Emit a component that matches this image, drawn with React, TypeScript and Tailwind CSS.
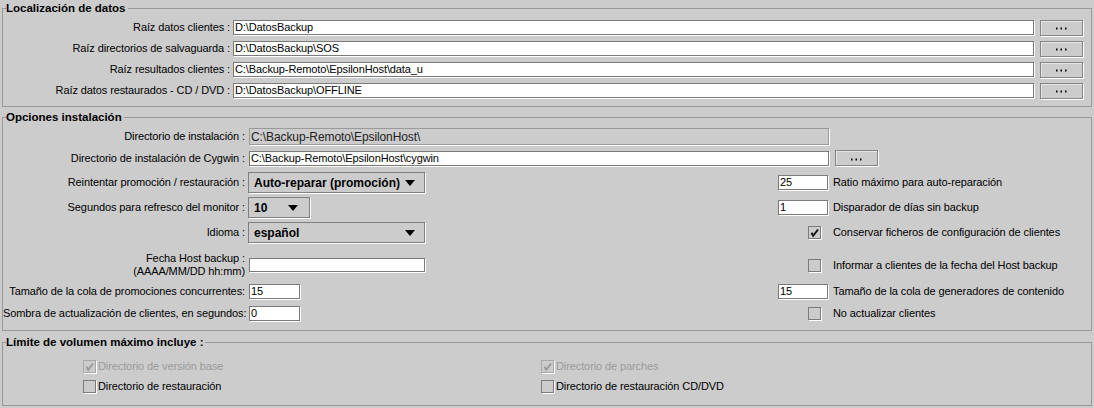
import React from "react";

function Field({ className = "", value = "", disabled = false }: { className?: string; value?: string; disabled?: boolean }) {
  return (
    <div
      className={
        "flex items-center whitespace-nowrap overflow-hidden pl-[1px] border shadow-[1px_1px_0_#ffffff] " +
        (disabled ? "bg-[#cccccc] border-[#9a9a9a] text-[#222222] text-[12px]" : "bg-white border-[#7a7a7a] ") +
        " " +
        className
      }
    >
      {value}
    </div>
  );
}

function Btn({ className = "" }: { className?: string }) {
  return (
    <div
      className={
        "flex items-center justify-center bg-[#cccccc] border border-[#858585] shadow-[1px_1px_0_#ffffff,inset_1px_1px_0_#e6e6e6] " +
        className
      }
    >
      <svg width="11" height="3" viewBox="0 0 11 3" className="mt-[2px]">
        <rect x="0" y="0.5" width="1.5" height="2" fill="#000000" />
        <rect x="4.5" y="0.5" width="1.5" height="2" fill="#000000" />
        <rect x="9" y="0.5" width="1.5" height="2" fill="#000000" />
      </svg>
    </div>
  );
}

function Combo({ className = "", value }: { className?: string; value: string }) {
  return (
    <div
      className={
        "flex items-center justify-between h-[21px] bg-[#cccccc] border border-[#808080] shadow-[1px_1px_0_#ffffff] pl-[5px] pr-[9px] font-bold text-[12px] tracking-normal " +
        className
      }
    >
      <span>{value}</span>
      <svg width="10" height="6" viewBox="0 0 10 6">
        <polygon points="0,0 10,0 5,6" fill="#000000" />
      </svg>
    </div>
  );
}

function Check({ checked = false, disabled = false }: { checked?: boolean; disabled?: boolean }) {
  return (
    <div
      className={
        "w-[13px] h-[13px] shrink-0 flex items-center justify-center bg-[#cccccc] border shadow-[1px_1px_0_#ffffff] " +
        (disabled ? "border-[#a8a8a8]" : "border-[#7a7a7a]")
      }
    >
      {checked && (
        <svg width="11" height="11" viewBox="0 0 11 11">
          <polyline
            points="2.5,5.8 4.2,8.8 9,2.5"
            fill="none"
            stroke={disabled ? "#9a9a9a" : "#111111"}
            strokeWidth="2"
          />
        </svg>
      )}
    </div>
  );
}

function Legend({ children }: { children: React.ReactNode }) {
  return <legend className="ml-[3px] pr-[2px] font-bold text-[11.5px] leading-[14px] tracking-normal">{children}</legend>;
}

function DataRow({ label, value }: { label: string; value: string }) {
  return (
    <div className="flex items-center h-[15px]">
      <div className="w-[227px] text-right whitespace-nowrap">{label}</div>
      <Field className="ml-[3px] w-[801px] h-[15px]" value={value} />
      <Btn className="ml-[6px] w-[43px] h-[16px]" />
    </div>
  );
}

function LeftLabel({ children }: { children: React.ReactNode }) {
  return <div className="w-[242px] text-right whitespace-nowrap">{children}</div>;
}

export default function App() {
  return (
    <div className="w-[1094px] h-[408px] overflow-hidden bg-[#cccccc] pt-[1px] px-[2px] text-[11px] tracking-[-0.1px] text-black font-['Liberation_Sans',Arial,sans-serif]">
      <fieldset className="border border-[#999999] pt-[5px] pb-[8px]">
        <Legend>Localización de datos</Legend>
        <div className="flex flex-col gap-[6px]">
          <DataRow label="Raíz datos clientes :" value="D:\DatosBackup" />
          <DataRow label="Raíz directorios de salvaguarda :" value="D:\DatosBackup\SOS" />
          <DataRow label="Raíz resultados clientes :" value="C:\Backup-Remoto\EpsilonHost\data_u" />
          <DataRow label="Raíz datos restaurados - CD / DVD :" value="D:\DatosBackup\OFFLINE" />
        </div>
      </fieldset>

      <fieldset className="mt-[3px] border border-[#999999] pt-[4px] pb-[9px]">
        <Legend>Opciones instalación</Legend>
        <div className="flex flex-col">
          <div className="flex items-center h-[17px]">
            <LeftLabel>Directorio de instalación :</LeftLabel>
            <Field disabled className="ml-[4px] w-[580px] h-[17px]" value="C:\Backup-Remoto\EpsilonHost\" />
          </div>

          <div className="mt-[5px] flex items-center h-[16px]">
            <LeftLabel>Directorio de instalación de Cygwin :</LeftLabel>
            <Field className="ml-[4px] w-[580px] h-[15px]" value="C:\Backup-Remoto\EpsilonHost\cygwin" />
            <Btn className="ml-[6px] w-[43px] h-[16px]" />
          </div>

          <div className="mt-[6px] flex items-center h-[21px]">
            <div className="w-[775px] flex items-center">
              <LeftLabel>Reintentar promoción / restauración :</LeftLabel>
              <Combo className="ml-[3px] w-[177px]" value="Auto-reparar (promoción)" />
            </div>
            <Field className="w-[50px] h-[15px]" value="25" />
            <span className="ml-[5px] whitespace-nowrap">Ratio máximo para auto-reparación</span>
          </div>

          <div className="mt-[4px] flex items-center h-[21px]">
            <div className="w-[775px] flex items-center">
              <LeftLabel>Segundos para refresco del monitor :</LeftLabel>
              <Combo className="ml-[3px] w-[62px] pr-[11px]" value="10" />
            </div>
            <Field className="w-[50px] h-[15px]" value="1" />
            <span className="ml-[5px] whitespace-nowrap">Disparador de días sin backup</span>
          </div>

          <div className="mt-[4px] flex items-center h-[21px]">
            <div className="w-[775px] flex items-center">
              <LeftLabel>Idioma :</LeftLabel>
              <Combo className="ml-[3px] w-[177px]" value="español" />
            </div>
            <div className="ml-[30px]">
              <Check checked />
            </div>
            <span className="ml-[12px] whitespace-nowrap">Conservar ficheros de configuración de clientes</span>
          </div>

          <div className="mt-[9px] flex items-center h-[26px]">
            <div className="w-[775px] flex items-center">
              <div className="w-[242px] text-right whitespace-nowrap leading-[13px]">
                <div>Fecha Host backup :</div>
                <div>(AAAA/MM/DD hh:mm)</div>
              </div>
              <Field className="ml-[4px] w-[176px] h-[14px]" value="" />
            </div>
            <div className="ml-[30px]">
              <Check />
            </div>
            <span className="ml-[12px] whitespace-nowrap">Informar a clientes de la fecha del Host backup</span>
          </div>

          <div className="mt-[6px] flex items-center h-[15px]">
            <div className="w-[775px] flex items-center">
              <LeftLabel>Tamaño de la cola de promociones concurrentes:</LeftLabel>
              <Field className="ml-[4px] w-[51px] h-[15px]" value="15" />
            </div>
            <Field className="w-[50px] h-[15px]" value="15" />
            <span className="ml-[5px] whitespace-nowrap">Tamaño de la cola de generadores de contenido</span>
          </div>

          <div className="mt-[7px] flex items-center h-[15px]">
            <div className="w-[775px] flex items-center">
              <LeftLabel>Sombra de actualización de clientes, en segundos:</LeftLabel>
              <Field className="ml-[4px] w-[51px] h-[15px]" value="0" />
            </div>
            <div className="ml-[30px]">
              <Check />
            </div>
            <span className="ml-[12px] whitespace-nowrap">No actualizar clientes</span>
          </div>
        </div>
      </fieldset>

      <fieldset className="mt-[4px] border border-[#999999] pt-[11px] pb-[12px]">
        <Legend>Límite de volumen máximo incluye :</Legend>
        <div className="pl-[80px] grid grid-cols-[458px_1fr] gap-y-[7px]">
          <div className="flex items-center h-[13px] text-[#9a9a9a]">
            <Check checked disabled />
            <span className="ml-[2px] whitespace-nowrap">Directorio de versión base</span>
          </div>
          <div className="flex items-center h-[13px] text-[#9a9a9a]">
            <Check checked disabled />
            <span className="ml-[2px] whitespace-nowrap">Directorio de parches</span>
          </div>
          <div className="flex items-center h-[13px]">
            <Check />
            <span className="ml-[2px] whitespace-nowrap">Directorio de restauración</span>
          </div>
          <div className="flex items-center h-[13px]">
            <Check />
            <span className="ml-[2px] whitespace-nowrap">Directorio de restauración CD/DVD</span>
          </div>
        </div>
      </fieldset>
    </div>
  );
}
